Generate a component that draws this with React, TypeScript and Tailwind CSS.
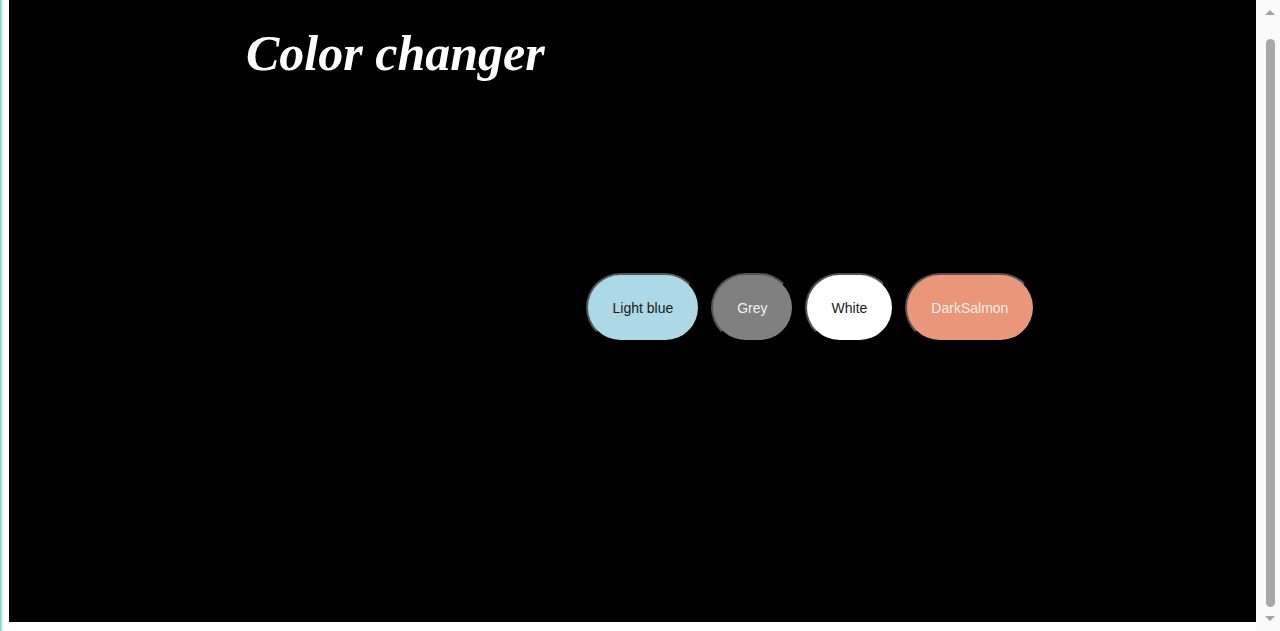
import { useState } from 'react';

const colors = [
    { name: 'Light blue', bg: 'bg-[#add8e6]', text: 'text-[#1a1a1a]' },
    { name: 'Grey', bg: 'bg-[#808080]', text: 'text-[#f2f2f2]' },
    { name: 'White', bg: 'bg-white', text: 'text-[#1a1a1a]' },
    { name: 'DarkSalmon', bg: 'bg-[#e9967a]', text: 'text-[#fbeee8]' },
];

const App = () => {
    const [, setActive] = useState('');

    return (
        <div className="flex h-[631px] w-[1280px] overflow-hidden bg-white">
            {/* left window edge */}
            <div className="flex w-[9px] shrink-0">
                <div className="w-[3px] bg-gradient-to-r from-[#6fd0c8] to-[#e8f7f6]" />
            </div>

            <div className="flex w-[1247px] shrink-0 flex-col">
                <main className="flex h-[622px] flex-col bg-black">
                    <h1 className="pt-[24px] pl-[237px] font-['Liberation_Serif',serif] text-[50px] leading-[58px] font-bold text-white italic">
                        Color changer
                    </h1>

                    <div className="mt-[191px] flex gap-[11px] pl-[577px]">
                        {colors.map((c) => (
                            <button
                                key={c.name}
                                onClick={() => setActive(c.name)}
                                className={`rounded-full border-2 border-black [border-style:outset] px-[24.5px] py-[24.5px] font-['Liberation_Sans',Arial,sans-serif] text-[14px] leading-[16px] ${c.bg} ${c.text}`}
                            >
                                {c.name}
                            </button>
                        ))}
                    </div>
                </main>
            </div>

            {/* scrollbar */}
            <div className="flex w-[24px] shrink-0 flex-col items-center bg-[#fafafa] pl-[4px]">
                <div className="mt-[10px] h-0 w-0 border-x-[5px] border-b-[5px] border-x-transparent border-b-[#a3a3a3]" />
                <div className="mt-[24px] w-[9px] flex-1 rounded-full bg-[#a8a8a8]" />
                <div className="mt-[9px] mb-[10px] h-0 w-0 border-x-[5px] border-t-[5px] border-x-transparent border-t-[#a3a3a3]" />
            </div>
        </div>
    );
};

export default App;
